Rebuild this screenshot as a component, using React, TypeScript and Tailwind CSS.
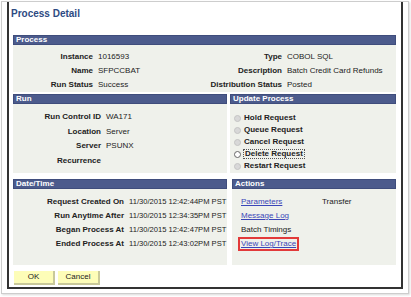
import type { ReactNode } from 'react';

// Process Detail page (PeopleSoft-style dialog)

const FONT = "font-['Liberation_Sans',Arial,sans-serif]";

function Header({ children }: { children: ReactNode }) {
  return (
    <div className="h-[10px] bg-[#4c5b8c] border border-[#3f4d7c] text-white font-bold text-[8px] leading-[8px] pl-[2px]">
      {children}
    </div>
  );
}

function Field({ label, value, labelW }: { label: string; value?: string; labelW: string }) {
  return (
    <div className="flex items-center h-[14px] whitespace-nowrap">
      <span className={`${labelW} shrink-0 text-right font-bold text-[#222]`}>{label}</span>
      <span className="pl-[5px] text-[#222]">{value}</span>
    </div>
  );
}

function Radio({ label, active }: { label: string; active?: boolean }) {
  return (
    <div className="flex items-center h-[12px] pl-[4px] gap-[3px]">
      <span
        className={
          active
            ? 'w-[7px] h-[7px] rounded-full bg-white border border-[#666]'
            : 'w-[7px] h-[7px] rounded-full bg-[#d8d8d8] border border-[#c4c4c4]'
        }
      />
      <span className={active ? 'font-bold text-[#222] outline outline-1 outline-dotted outline-[#555] px-[1px]' : 'font-bold text-[#222]'}>
        {label}
      </span>
    </div>
  );
}

export default function App() {
  return (
    <div className={`${FONT} w-[411px] h-[297px] bg-white pl-[1px] pt-[1px] text-[8px] leading-none`}>
      <div className="w-[408px] h-[293px] border border-[#cdcdcd] px-[5px] shadow-[1px_1px_2px_rgba(0,0,0,0.15)]">
        <div className="h-[287px] border-x-2 border-b-2 border-[#333] flex flex-col pl-[4px] pr-[5px]">
          {/* title */}
          <div className="h-[33px] pt-[7px] -ml-[2px] text-[10px] font-bold text-[#2d4a82]">Process Detail</div>

          {/* Process */}
          <Header>Process</Header>
          <div className="bg-[#eff1eb] pt-[5px] h-[47px] grid grid-cols-[189px_1fr]">
            <div>
              <Field labelW="w-[80px]" label="Instance" value="1016593" />
              <Field labelW="w-[80px]" label="Name" value="SFPCCBAT" />
              <Field labelW="w-[80px]" label="Run Status" value="Success" />
            </div>
            <div>
              <Field labelW="w-[80px]" label="Type" value="COBOL SQL" />
              <Field labelW="w-[80px]" label="Description" value="Batch Credit Card Refunds" />
              <Field labelW="w-[80px]" label="Distribution Status" value="Posted" />
            </div>
          </div>

          {/* Run / Update Process */}
          <div className="mt-[2px] flex gap-[3px]">
            <div className="w-[214px]">
              <Header>Run</Header>
              <div className="bg-[#eff1eb] pt-[6px] h-[69px]">
                <div className="[&>div]:h-[14.5px]">
                  <Field labelW="w-[88px]" label="Run Control ID" value="WA171" />
                  <Field labelW="w-[88px]" label="Location" value="Server" />
                  <Field labelW="w-[88px]" label="Server" value="PSUNX" />
                  <Field labelW="w-[88px]" label="Recurrence" />
                </div>
              </div>
            </div>
            <div className="flex-1">
              <Header>Update Process</Header>
              <div className="bg-[#eff1eb] pt-[8px] h-[69px]">
                <Radio label="Hold Request" />
                <Radio label="Queue Request" />
                <Radio label="Cancel Request" />
                <Radio label="Delete Request" active />
                <Radio label="Restart Request" />
              </div>
            </div>
          </div>

          {/* Date/Time / Actions */}
          <div className="mt-[6px] flex gap-[5px]">
            <div className="w-[214px] overflow-hidden">
              <Header>Date/Time</Header>
              <div className="bg-[#eff1eb] pt-[6px] h-[76px] text-[7.6px]">
                <Field labelW="w-[111px] text-[8px]" label="Request Created On" value="11/30/2015 12:42:44PM PST" />
                <Field labelW="w-[111px] text-[8px]" label="Run Anytime After" value="11/30/2015 12:34:35PM PST" />
                <Field labelW="w-[111px] text-[8px]" label="Began Process At" value="11/30/2015 12:42:47PM PST" />
                <Field labelW="w-[111px] text-[8px]" label="Ended Process At" value="11/30/2015 12:43:02PM PST" />
              </div>
            </div>
            <div className="flex-1">
              <Header>Actions</Header>
              <div className="bg-[#eff1eb] pt-[6px] h-[76px] pl-[9px] grid grid-cols-[81px_1fr] auto-rows-[14px] items-center">
                <span className="text-[#3a46b8] underline">Parameters</span>
                <span className="text-[#222]">Transfer</span>
                <span className="text-[#3a46b8] underline col-start-1">Message Log</span>
                <span className="text-[#222] col-start-1">Batch Timings</span>
                <span className="col-start-1 -ml-[3px]">
                  <span className="inline-block border-2 border-[#e23a3a] px-[1px] py-[1px] text-[#3a46b8] underline">View Log/Trace</span>
                </span>
              </div>
            </div>
          </div>

          {/* buttons */}
          <div className="mt-[6px] flex gap-[3px] pl-[1px]">
            <button className="w-[41px] h-[14px] bg-[#fdfdb8] border-r-2 border-b-2 border-[#c9c99a] text-[8px] text-[#222]">OK</button>
            <button className="w-[42px] h-[14px] bg-[#fdfdb8] border-r-2 border-b-2 border-[#c9c99a] text-[8px] text-[#222]">Cancel</button>
          </div>
        </div>
      </div>
    </div>
  );
}
